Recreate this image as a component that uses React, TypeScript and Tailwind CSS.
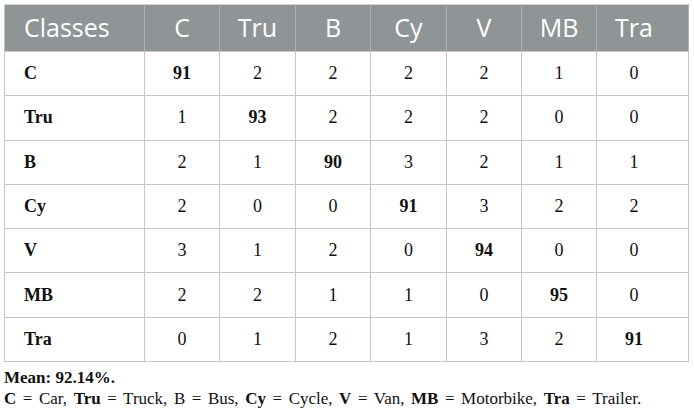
import React from "react";

const cols = ["C", "Tru", "B", "Cy", "V", "MB", "Tra"];
const widths = ["w-[75px]", "w-[76px]", "w-[75px]", "w-[76px]", "w-[75px]", "w-[75px]", "w-[92px]"];
const rows: { label: string; vals: number[]; diag: number }[] = [
  { label: "C", vals: [91, 2, 2, 2, 2, 1, 0], diag: 0 },
  { label: "Tru", vals: [1, 93, 2, 2, 2, 0, 0], diag: 1 },
  { label: "B", vals: [2, 1, 90, 3, 2, 1, 1], diag: 2 },
  { label: "Cy", vals: [2, 0, 0, 91, 3, 2, 2], diag: 3 },
  { label: "V", vals: [3, 1, 2, 0, 94, 0, 0], diag: 4 },
  { label: "MB", vals: [2, 2, 1, 1, 0, 95, 0], diag: 5 },
  { label: "Tra", vals: [0, 1, 2, 1, 3, 2, 91], diag: 6 },
];

export default function App() {
  return (
    <div className="w-[694px] h-[420px] bg-white pl-[4px] pt-[4px] overflow-hidden">
      <table className="table-fixed border-collapse w-[684px] border border-[#c6c6c6]">
        <thead>
          <tr className="h-[47px] bg-[#8f9596] border-t border-[#d6d9d9]">
            <th
              className="w-[140px] text-left pl-[19px] text-white font-normal text-[25px] border-r border-[#aeb2b3]"
              style={{ fontFamily: '"Open Sans", sans-serif' }}
            >
              Classes
            </th>
            {cols.map((c, i) => (
              <th
                key={c}
                className={`${widths[i]} text-center text-white font-normal text-[25px] border-r border-[#aeb2b3] ${i === 6 ? "pr-[17px]" : ""}`}
                style={{ fontFamily: '"Open Sans", sans-serif' }}
              >
                {c}
              </th>
            ))}
          </tr>
        </thead>
        <tbody className="text-[18px] text-[#111]" style={{ fontFamily: '"Liberation Serif", serif' }}>
          {rows.map((r) => (
            <tr key={r.label} className="h-[44.3px]">
              <td className="text-left pl-[19px] font-bold border border-[#c6c6c6]">{r.label}</td>
              {r.vals.map((v, i) => (
                <td
                  key={i}
                  className={`text-center border border-[#c6c6c6] ${i === r.diag ? "font-bold" : ""} ${i === 6 ? "pr-[17px]" : ""}`}
                >
                  {v}
                </td>
              ))}
            </tr>
          ))}
        </tbody>
      </table>
      <div
        className="mt-[5px] text-[17px] leading-[21px] text-[#111]"
        style={{ fontFamily: '"Liberation Serif", serif' }}
      >
        <div className="font-bold">Mean: 92.14%.</div>
        <div className="[word-spacing:2.3px]">
          <b>C</b> = Car, <b>Tru</b> = Truck, B = Bus, <b>Cy</b> = Cycle, <b>V</b> = Van, <b>MB</b> = Motorbike,{" "}
          <b>Tra</b> = Trailer.
        </div>
      </div>
    </div>
  );
}
